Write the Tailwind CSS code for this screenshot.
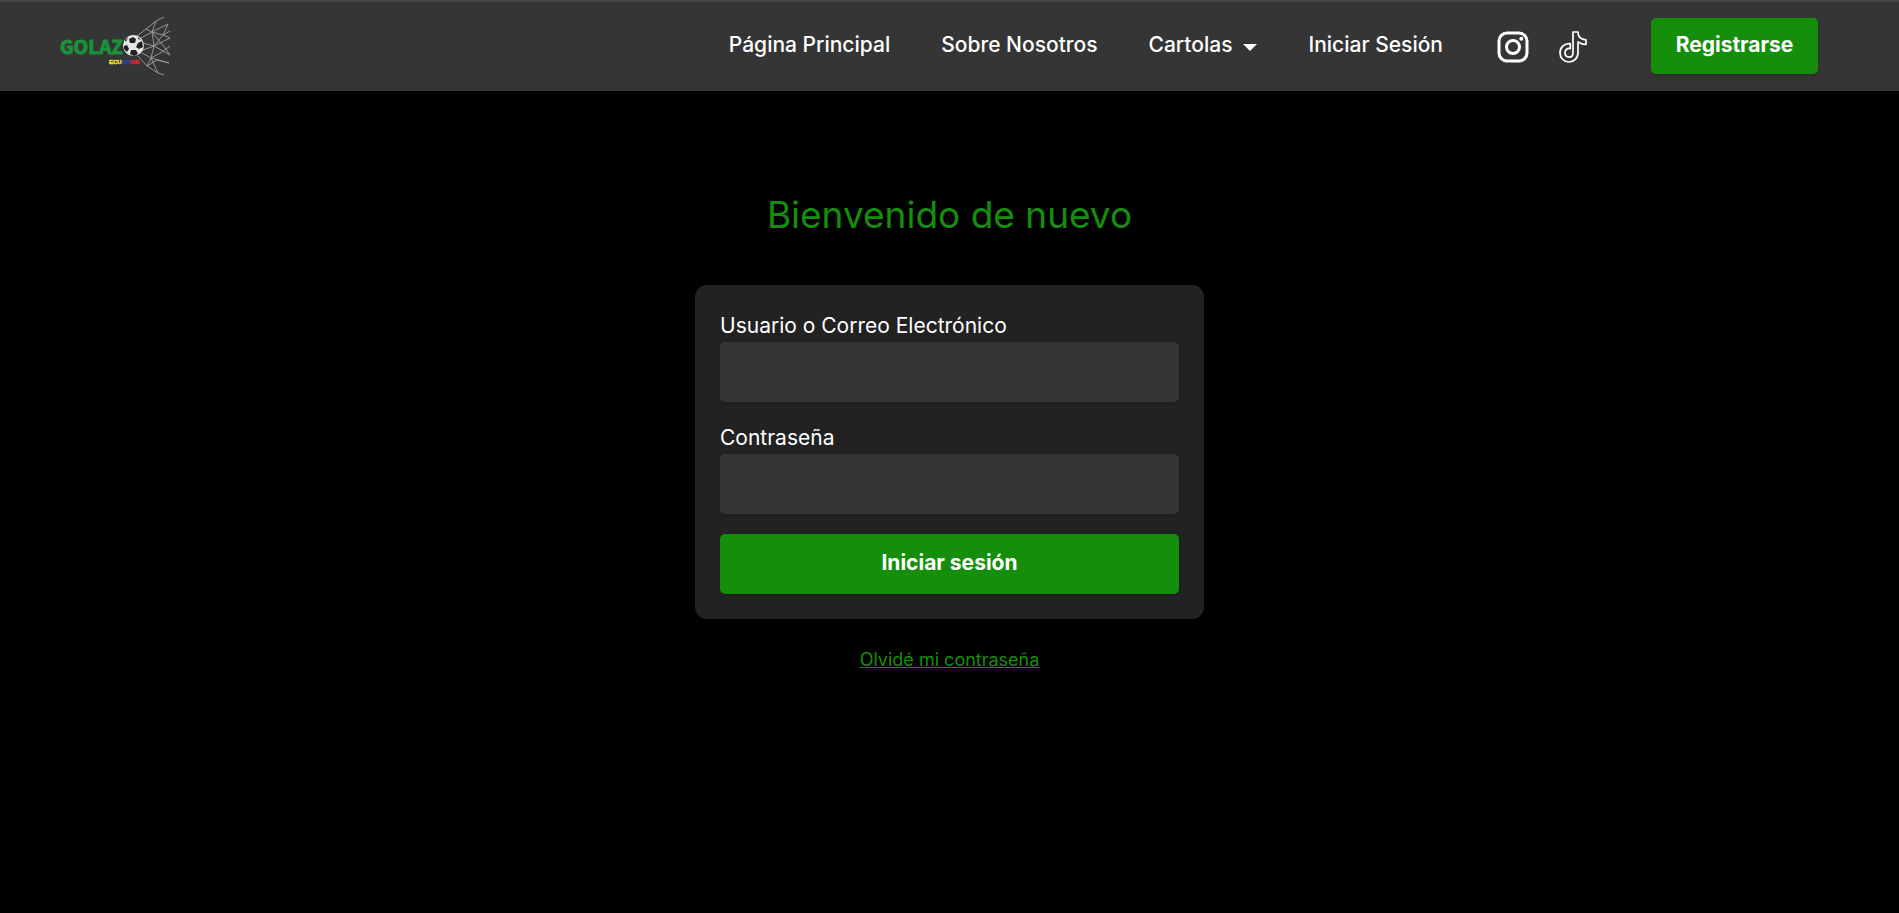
<!DOCTYPE html>
<html lang="es">
<head>
<meta charset="utf-8">
<meta name="viewport" content="width=device-width, initial-scale=1">
<title>Golazo Ecuador</title>
<script src="https://cdn.jsdelivr.net/npm/@tailwindcss/browser@4"></script>
</head>
<body class="min-h-screen bg-black font-['Inter',sans-serif] text-white">
<header class="flex items-center justify-between border-t-2 border-[#444444] bg-[#353535] pt-4 pr-[81px] pb-[17px] pl-[60px]">
  <a href="#" aria-label="Golazo Ecuador">
    <svg class="h-[60px] w-[112px] -my-0.5" viewBox="60 16 112 60">
      <text x="60" y="54" font-family="Noto Sans CJK SC, sans-serif" font-size="19" font-weight="700" fill="#1b9238" stroke="#1b9238" stroke-width="1">GOLAZ</text>
      <g fill="none" stroke="#b4b6bc" stroke-width="1" opacity=".75">
        <path d="M137 36 146 29 156 21 164 17M141 38 152 32 168 24M143 43 154 46 170 38M143 50 154 46 170 55M142 53 151 58 169 63M138 56 147 66 158 73 164 75"/>
        <path d="M146 29 152 32 154 46 151 58 147 66M156 21 152 32 163 35 170 38M152 32 165 48 170 55M154 46 163 35 168 24M151 58 162 52 170 46M151 58 158 73M147 66 157 60 169 63M163 35 170 31"/>
      </g>
      <circle cx="133.500" cy="45.500" r="10.500" fill="#e6e6e6"/>
      <g fill="#202124">
        <path d="m129 39 4-2 3 2-1 4-5 0zM138 43l4-2 1 6-4 2-3-2zM124 46l3-1 2 4-2 3-3-3zM131 50l5 0 2 4-4 2-4-2z"/>
        <path d="M125 40l3-3-2 5zM138 37l3 3-3-1z"/>
      </g>
      <text x="109" y="64" font-family="Liberation Sans" font-size="6" font-weight="700" stroke-width=".5"><tspan fill="#e9dc2b" stroke="#e9dc2b">ECU</tspan><tspan fill="#2448a8" stroke="#2448a8">AD</tspan><tspan fill="#e02630" stroke="#e02630">OR</tspan></text>
    </svg>
  </a>
  <div class="flex items-center">
    <nav class="flex items-center gap-[51px] pb-0.5 text-[21px] leading-7 font-medium">
      <a href="#">Página Principal</a>
      <a href="#">Sobre Nosotros</a>
      <button type="button" class="flex items-center gap-[11px] font-medium">Cartolas
        <svg class="mt-1 h-[7px] w-3.5" viewBox="0 0 14 7" fill="white"><path d="M0 0h14L7 7z"/></svg>
      </button>
      <a href="#">Iniciar Sesión</a>
    </nav>
    <div class="ml-[54px] flex items-center gap-[30px] pt-0.5">
      <a href="#" aria-label="Instagram">
        <svg class="h-8 w-8" viewBox="0 0 32 32" fill="none" stroke="white" stroke-width="3"><rect x="2" y="2" width="28" height="28" rx="8"/><circle cx="16" cy="16" r="6.500"/><circle cx="24.300" cy="7.700" r="2" fill="white" stroke="none"/></svg>
      </a>
      <a href="#" aria-label="TikTok">
        <svg class="h-8 w-7" viewBox="0 0 28 32" fill="none" stroke="white" stroke-width="1.700" stroke-linejoin="round"><path d="M14 1h5c0 4.500 3 7.500 8 7.800v4.700c-3 0-5.800-1-8-2.600v10.300c0 6-4 9.800-9.200 9.800C4.700 31 1 26.800 1 21.800c0-5.600 4.600-9.800 10.300-9.200v5c-2.800-.7-5.300 1.200-5.300 4 0 2.600 1.700 4.500 4.100 4.500 2.500 0 3.900-1.700 3.900-4.400z"/></svg>
      </a>
    </div>
    <a href="#" class="ml-16 flex h-14 w-[167px] justify-center rounded-[5px] bg-[#158f0b] pt-[13px] text-[21px] leading-7 font-bold shadow-md">Registrarse</a>
  </div>
</header>
<main class="flex flex-col items-center px-4 pt-[100px]">
  <h1 class="text-[37px] leading-12 font-normal text-[#158f0b]">Bienvenido de nuevo</h1>
  <form class="mt-[46px] flex w-full max-w-[509px] flex-col rounded-xl bg-[#222222] p-[25px]">
    <label for="user" class="text-[21px] leading-8">Usuario o Correo Electrónico</label>
    <input id="user" type="text" class="h-15 w-full rounded-[5px] bg-[#353535] px-4 text-[21px] shadow-sm outline-none">
    <label for="password" class="mt-5 text-[21px] leading-8">Contraseña</label>
    <input id="password" type="password" class="h-15 w-full rounded-[5px] bg-[#353535] px-4 text-[21px] shadow-sm outline-none">
    <button type="submit" class="mt-5 h-15 rounded-[5px] bg-[#158f0b] pb-0.5 text-[21px] font-bold shadow-sm">Iniciar sesión</button>
  </form>
  <a href="#" class="mt-[27px] text-[18px] leading-7 font-normal text-[#158f0b] underline">Olvidé mi contraseña</a>
</main>
</body>
</html>
